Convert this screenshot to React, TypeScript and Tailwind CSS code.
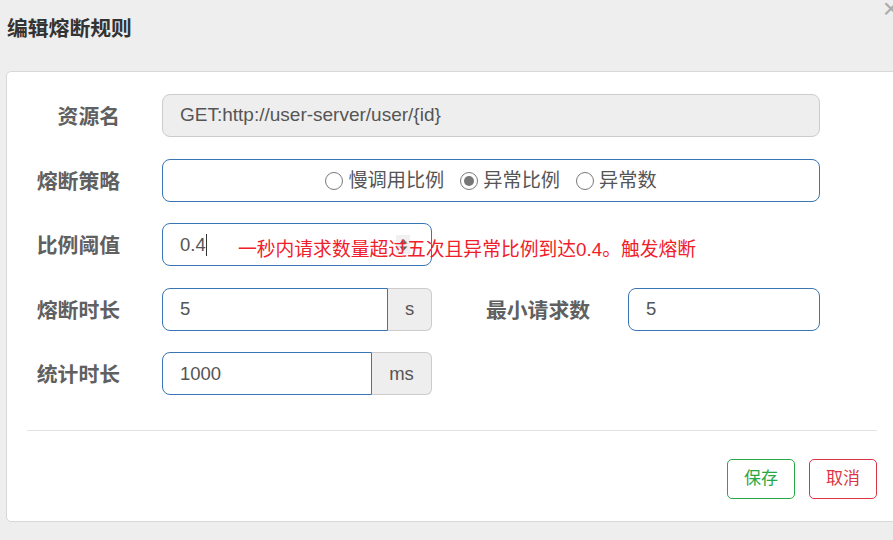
import React from "react";

const font = { fontFamily: '"Liberation Sans", "Noto Sans CJK SC", sans-serif' };

function Radio({ checked, label }: { checked?: boolean; label: string }) {
  return (
    <label className="flex items-center gap-[5px]">
      <span className="w-[18px] h-[18px] shrink-0 rounded-full border-[1.5px] border-[#7a7a7a] bg-white flex items-center justify-center">
        {checked && <span className="w-[10px] h-[10px] rounded-full bg-[#777]" />}
      </span>
      <span>{label}</span>
    </label>
  );
}

function Label({ children, w = "w-[113px]" }: { children: React.ReactNode; w?: string }) {
  return (
    <div className={`${w} shrink-0 text-right text-[20.8px] font-bold text-[#606060] pt-[3px]`}>{children}</div>
  );
}

export default function App() {
  return (
    <div
      className="relative w-[893px] h-[540px] bg-[#eeeeee] overflow-hidden text-[#555]"
      style={font}
    >
      <span className="absolute right-[-6px] top-[-5px] text-[28px] text-[#aaa] leading-none">×</span>

      <div className="pt-[13px] pl-[7px] h-[71px]">
        <h2 className="text-[20.8px] font-bold text-[#333]">编辑熔断规则</h2>
      </div>

      <div className="ml-[6px] w-[900px] h-[451px] bg-white border border-[#d8d8d8] rounded-[5px] pt-[22px]">
        <div className="flex flex-col gap-y-[21.5px]">
          {/* 资源名 */}
          <div className="flex items-center h-[43px]">
            <Label>资源名</Label>
            <div className="ml-[42px] w-[658px] h-[43px] rounded-[8px] border border-[#ccc] bg-[#eeeeee] flex items-center px-[17px] text-[19px]">
              GET:http://user-server/user/{"{id}"}
            </div>
          </div>

          {/* 熔断策略 */}
          <div className="flex items-center h-[43px]">
            <Label>熔断策略</Label>
            <div className="ml-[42px] w-[658px] h-[43px] rounded-[8px] border border-[#3a76b4] flex items-center justify-center gap-[16px] text-[19.2px] pt-[3px]">
              <Radio label="慢调用比例" />
              <Radio checked label="异常比例" />
              <Radio label="异常数" />
            </div>
          </div>

          {/* 比例阈值 */}
          <div className="relative flex items-center h-[43px]">
            <Label>比例阈值</Label>
            <div className="ml-[42px] w-[270px] h-[43px] rounded-[8px] border border-[#3a76b4] flex items-center pl-[17px] text-[18.5px]">
              <span>0.4</span>
              <span className="w-px h-[22px] bg-[#333]" />
              <span className="ml-auto mr-[21px] w-[14px] h-[19px] bg-[#f0f0f0] flex items-center justify-center">
                <svg width="9" height="14" viewBox="0 0 9 14">
                  <path d="M4.5 1 L8.5 5.5 H0.5 Z" fill="#666" />
                  <path d="M4.5 13 L8.5 8.5 H0.5 Z" fill="#666" />
                </svg>
              </span>
            </div>
            <span className="absolute left-[231px] top-[13px] text-[18.8px] text-[#f0202a] whitespace-nowrap">
              一秒内请求数量超过五次且异常比例到达0.4。触发熔断
            </span>
          </div>

          {/* 熔断时长 */}
          <div className="flex items-center h-[43px]">
            <Label>熔断时长</Label>
            <div className="ml-[42px] flex h-[43px] text-[18.5px]">
              <div className="w-[226px] rounded-l-[8px] border border-[#3a76b4] flex items-center pl-[17px]">5</div>
              <div className="w-[44px] rounded-r-[6px] border border-l-0 border-[#ccc] bg-[#eeeeee] flex items-center justify-center">s</div>
            </div>
            <Label w="w-[158px]">最小请求数</Label>
            <div className="ml-[38px] w-[192px] h-[43px] rounded-[8px] border border-[#3a76b4] flex items-center pl-[17px] text-[18.5px]">
              5
            </div>
          </div>

          {/* 统计时长 */}
          <div className="flex items-center h-[43px]">
            <Label>统计时长</Label>
            <div className="ml-[42px] flex h-[43px] text-[18.5px]">
              <div className="w-[210px] rounded-l-[8px] border border-[#3a76b4] flex items-center pl-[17px]">1000</div>
              <div className="w-[60px] rounded-r-[6px] border border-l-0 border-[#ccc] bg-[#eeeeee] flex items-center justify-center">ms</div>
            </div>
          </div>
        </div>

        <div className="ml-[20px] w-[850px] mt-[35px] border-t border-[#e2e2e2]" />

        <div className="w-[870px] flex justify-end gap-[14px] mt-[28px]">
          <button className="w-[68px] h-[40px] rounded-[5px] border border-[#28a745] text-[#28a745] text-[17px] bg-white">
            保存
          </button>
          <button className="w-[68px] h-[40px] rounded-[5px] border border-[#dc3545] text-[#dc3545] text-[17px] bg-white">
            取消
          </button>
        </div>
      </div>
    </div>
  );
}
